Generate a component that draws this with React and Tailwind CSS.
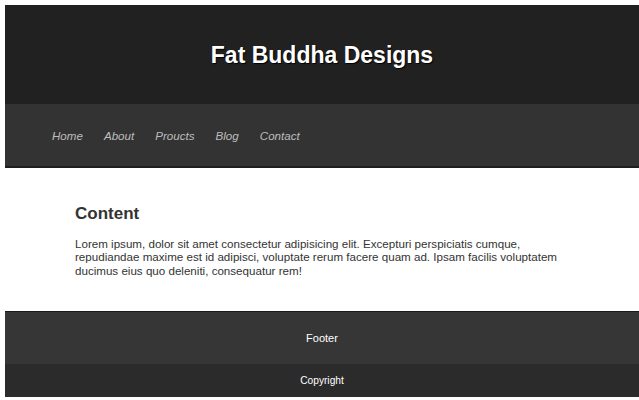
import React from "react";

const links = ["Home", "About", "Proucts", "Blog", "Contact"];

function App() {
  return (
    <div className="min-h-screen bg-white pl-[5px] pt-[5px] font-['Liberation_Sans',Arial,sans-serif]">
      <header className="flex h-[99px] items-center justify-center bg-[#212121] pt-[2px]">
        <h1 className="text-[23px] font-bold text-white [text-shadow:1px_1px_1px_#000]">
          Fat Buddha Designs
        </h1>
      </header>

      <nav className="flex h-[64px] items-center gap-[21px] border-b-2 border-[#1e1e1e] bg-[#333333] pl-[47px] pt-[1px]">
        {links.map((link) => (
          <a key={link} href="#" className="text-[11.6px] italic text-[#bdbdbd]">
            {link}
          </a>
        ))}
      </nav>

      <main className="h-[143px] bg-white pl-[70px] pt-[35px] text-[#333333]">
        <h2 className="text-[17px] font-bold leading-[22px]">Content</h2>
        <p className="mt-[12px] w-[500px] text-[11.6px] leading-[13.3px]">
          Lorem ipsum, dolor sit amet consectetur adipisicing elit. Excepturi perspiciatis cumque,
          repudiandae maxime est id adipisci, voluptate rerum facere quam ad. Ipsam facilis voluptatem
          ducimus eius quo deleniti, consequatur rem!
        </p>
      </main>

      <footer>
        <div className="flex h-[53px] items-center justify-center border-t border-[#1a1a1a] bg-[#363636] pt-[1px] text-[11px] text-white">
          Footer
        </div>
        <div className="flex h-[33px] items-center justify-center bg-[#2b2b2b] text-[10.2px] text-white">
          Copyright
        </div>
      </footer>
    </div>
  );
}

export default App;
